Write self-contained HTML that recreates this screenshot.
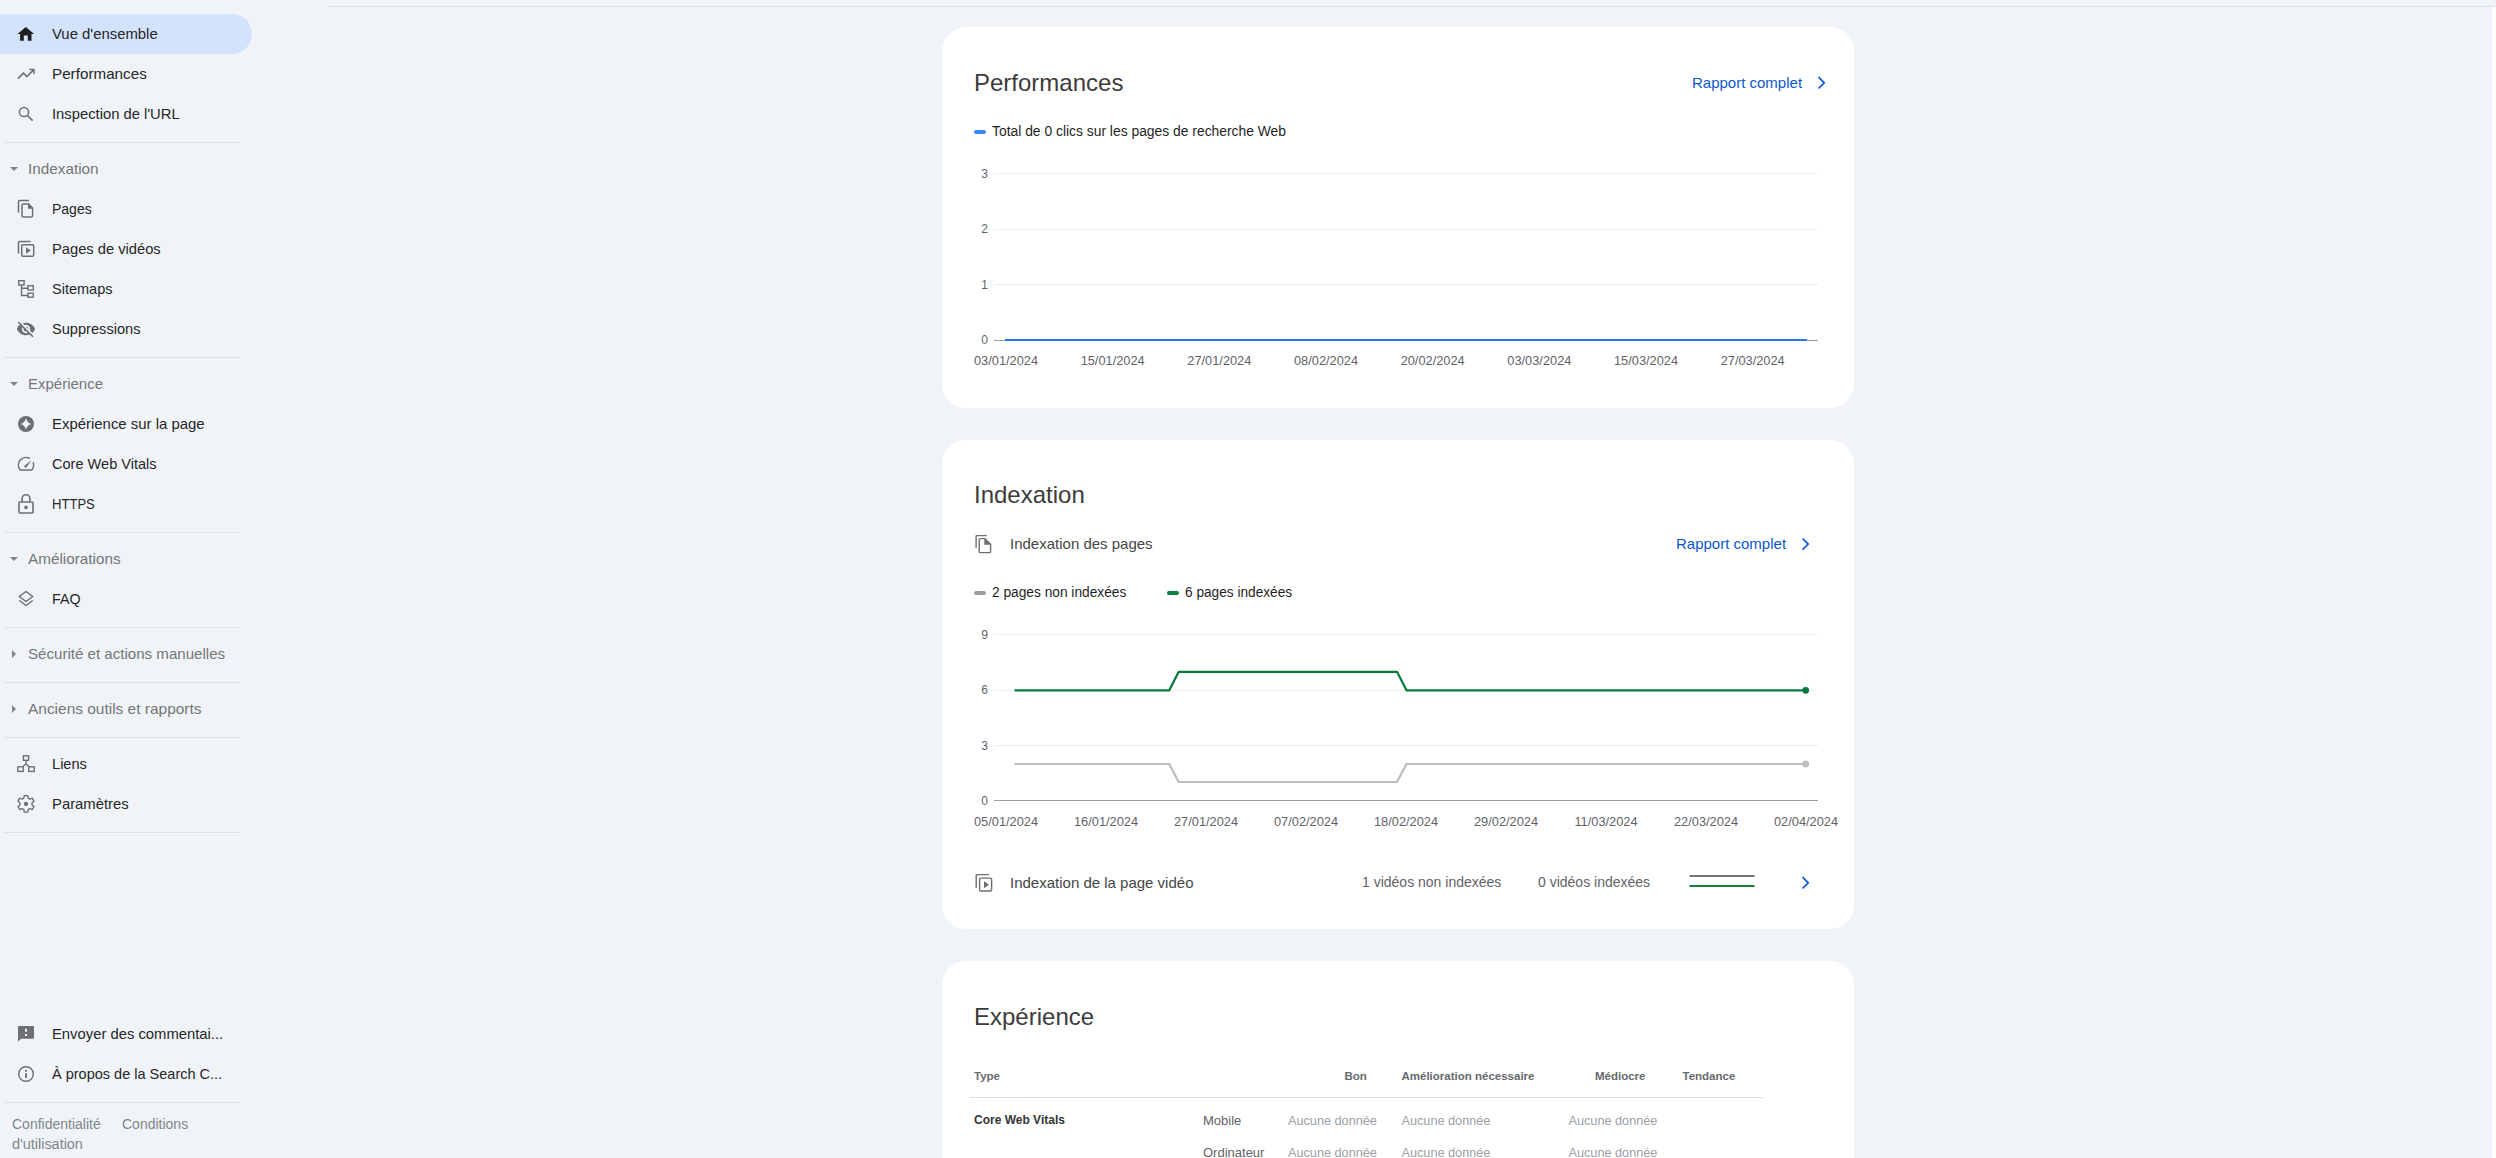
<!DOCTYPE html>
<html><head><meta charset="utf-8">
<style>
*{margin:0;padding:0;box-sizing:border-box}
html,body{width:2496px;height:1158px;overflow:hidden;background:#f0f4f9;font-family:"Liberation Sans",sans-serif;color:#1f1f1f}
.a{position:absolute;white-space:nowrap}
.topline{position:absolute;left:328px;top:6px;width:2168px;height:1px;background:#e0e1de}
.rstrip{position:absolute;left:2492px;top:7px;width:4px;height:1151px;background:#fff}
.pill{position:absolute;left:0;top:14px;width:252px;height:40px;background:#d3e3fd;border-radius:0 20px 20px 0}
.it{position:absolute;left:52px;transform-origin:0 0;font-size:15px;line-height:20px;color:#262626}
.sec{position:absolute;left:28px;transform-origin:0 0;font-size:15px;line-height:20px;color:#747775}
.ic{position:absolute;left:14px;width:24px;height:24px}
.dv{position:absolute;left:4px;width:236px;height:1px;background:#e1e1e1}
.tri{position:absolute;width:0;height:0}
.card{position:absolute;left:942px;width:912px;background:#fff;border-radius:24px}
.h{position:absolute;left:32px;font-size:24px;line-height:32px;color:#1f1f1f}
.lnk{position:absolute;font-size:15px;line-height:20px;color:#0b57d0}
.yl{position:absolute;font-size:12px;line-height:14px;color:#5f6368;text-align:right;width:20px}
.xl{position:absolute;font-size:12.5px;line-height:14px;color:#5f6368;text-align:center;width:80px}
.lg{position:absolute;font-size:14px;line-height:18px;color:#1f1f1f}
.th{position:absolute;font-size:12px;font-weight:bold;line-height:16px;color:#5f6368}
.td{position:absolute;font-size:13px;line-height:16px;color:#9aa0a6}
</style></head><body>
<div class="topline"></div>
<div class="rstrip"></div>
<div class="pill"></div>
<!-- SIDEBAR -->
<svg class="ic" style="top:22px" viewBox="0 0 24 24"><path fill="#1f1f1f" d="M6.1 18.7V11.9H3.5L11.8 4.9L20.1 11.9H17.5V18.7H13.8V13.5H9.8V18.7Z"/></svg>
<div class="it" style="top:24px;transform:scaleX(0.992)">Vue d'ensemble</div>
<svg class="ic" style="top:62px" viewBox="0 0 24 24"><path fill="none" stroke="#6e6f71" stroke-width="1.5" d="M3.9 16.6L9.4 11.1L12.9 14.6L19.6 7.9M15.3 7.4H20V12.1"/></svg>
<div class="it" style="top:64px;transform:scaleX(1.015)">Performances</div>
<svg class="ic" style="top:102px" viewBox="0 0 24 24"><circle cx="10" cy="10" r="4.6" fill="none" stroke="#6e6f71" stroke-width="1.5"/><path d="M13.4 13.4l5.2 5.2" stroke="#6e6f71" stroke-width="1.6"/></svg>
<div class="it" style="top:104px;transform:scaleX(0.985)">Inspection de l'URL</div>
<div class="dv" style="top:142px"></div>
<svg class="ic" style="top:157px;left:2px" viewBox="0 0 24 24"><path fill="#80868b" d="M8 10l4 4 4-4z"/></svg>
<div class="sec" style="top:159px;transform:scaleX(1.02)">Indexation</div>
<svg class="ic" style="top:197px" viewBox="0 0 24 24"><g fill="none" stroke="#6e6f71" stroke-width="1.5"><path d="M4.5 15.5V4.8q0-1.3 1.3-1.3H15"/><path d="M14.6 7.1H9.3q-1.3 0-1.3 1.3v10.3q0 1.3 1.3 1.3h8q1.3 0 1.3-1.3V11.1z"/></g><path fill="#6e6f71" d="M14 6.6v5.2h5.1z"/></svg>
<div class="it" style="top:199px;transform:scaleX(0.933)">Pages</div>
<svg class="ic" style="top:237px" viewBox="0 0 24 24"><g fill="none" stroke="#6e6f71" stroke-width="1.5"><path d="M4.5 16.5V5.6q0-1.2 1.2-1.2H16.6"/><rect x="7.7" y="7.7" width="12" height="11.6" rx="1.4"/></g><path fill="#6e6f71" d="M12 10.2v6.6l4.9-3.3z"/></svg>
<div class="it" style="top:239px;transform:scaleX(0.98)">Pages de vidéos</div>
<svg class="ic" style="top:277px" viewBox="0 0 24 24"><g fill="none" stroke="#6e6f71" stroke-width="1.4"><rect x="4.7" y="3.7" width="5.4" height="4.3"/><rect x="14" y="8.7" width="5.2" height="4.3"/><rect x="14" y="16.2" width="5.2" height="4"/><path d="M7.5 8v10.5h6.5M7.5 11.3h6.5"/></g></svg>
<div class="it" style="top:279px;transform:scaleX(0.968)">Sitemaps</div>
<svg class="ic" style="top:317px" viewBox="0 0 24 24"><path fill="#6e6f71" transform="translate(2 2) scale(0.833)" d="M12 7c2.76 0 5 2.24 5 5 0 .65-.13 1.26-.36 1.83l2.92 2.92c1.51-1.26 2.7-2.89 3.43-4.75-1.73-4.39-6-7.5-11-7.5-1.4 0-2.74.25-3.98.7l2.16 2.16C10.74 7.130 11.35 7 12 7zM2 4.27l2.28 2.28.46.46C3.080 8.3 1.78 10.02 1 12c1.73 4.39 6 7.5 11 7.5 1.55 0 3.03-.3 4.38-.84l.42.42L19.73 22 21 20.73 3.27 3 2 4.27zM7.53 9.8l1.55 1.55c-.05.21-.08.43-.08.65 0 1.66 1.34 3 3 3 .22 0 .44-.03.65-.08l1.55 1.55c-.67.33-1.41.53-2.2.53-2.76 0-5-2.24-5-5 0-.79.2-1.53.53-2.2zm4.31-.78l3.15 3.15.02-.16c0-1.66-1.34-3-3-3l-.17.01z"/></svg>
<div class="it" style="top:319px;transform:scaleX(0.974)">Suppressions</div>
<div class="dv" style="top:357px"></div>
<svg class="ic" style="top:372px;left:2px" viewBox="0 0 24 24"><path fill="#80868b" d="M8 10l4 4 4-4z"/></svg>
<div class="sec" style="top:374px;transform:scaleX(1.0)">Expérience</div>
<svg class="ic" style="top:412px" viewBox="0 0 24 24"><circle cx="12" cy="12" r="8" fill="#6e6f71"/><path fill="#f0f4f9" d="M12 6.3Q13.2 10.8 17.3 12Q13.2 13.2 12 17.5Q10.8 13.2 6.7 12Q10.8 10.8 12 6.3z"/></svg>
<div class="it" style="top:414px;transform:scaleX(0.995)">Expérience sur la page</div>
<svg class="ic" style="top:452px" viewBox="0 0 24 24"><g fill="none" stroke="#6e6f71" stroke-width="1.5"><path d="M15.8 6.52A7.6 7.6 0 0 0 6.19 18H17.81A7.6 7.6 0 0 0 19.07 10.3"/></g><path fill="#6e6f71" d="M11 13.2l6.5-5-4.7 6.6a1.3 1.3 0 1 1-1.8-1.6z"/></svg>
<div class="it" style="top:454px;transform:scaleX(0.97)">Core Web Vitals</div>
<svg class="ic" style="top:492px" viewBox="0 0 24 24"><g fill="none" stroke="#6e6f71" stroke-width="1.6"><rect x="5" y="10" width="14" height="11" rx="1"/><path d="M8.1 10V6.6a3.9 3.9 0 0 1 7.8 0V10"/></g><circle cx="12" cy="15.4" r="1.8" fill="#6e6f71"/></svg>
<div class="it" style="top:494px;transform:scaleX(0.871)">HTTPS</div>
<div class="dv" style="top:532px"></div>
<svg class="ic" style="top:547px;left:2px" viewBox="0 0 24 24"><path fill="#80868b" d="M8 10l4 4 4-4z"/></svg>
<div class="sec" style="top:549px;transform:scaleX(1.02)">Améliorations</div>
<svg class="ic" style="top:587px" viewBox="0 0 24 24"><g fill="none" stroke="#6e6f71" stroke-width="1.5" stroke-linejoin="round"><path d="M12 4.5l6.8 5-6.8 5-6.8-5z"/><path d="M5.3 13.5l6.7 5 6.8-5"/></g></svg>
<div class="it" style="top:589px;transform:scaleX(0.95)">FAQ</div>
<div class="dv" style="top:627px"></div>
<svg class="ic" style="top:642px;left:2px" viewBox="0 0 24 24"><path fill="#80868b" d="M10 8l4 4-4 4z"/></svg>
<div class="sec" style="top:644px;transform:scaleX(1.006)">Sécurité et actions manuelles</div>
<div class="dv" style="top:682px"></div>
<svg class="ic" style="top:697px;left:2px" viewBox="0 0 24 24"><path fill="#80868b" d="M10 8l4 4-4 4z"/></svg>
<div class="sec" style="top:699px;transform:scaleX(1.03)">Anciens outils et rapports</div>
<div class="dv" style="top:737px"></div>
<svg class="ic" style="top:752px" viewBox="0 0 24 24"><g fill="none" stroke="#6e6f71" stroke-width="1.4"><rect x="9.4" y="3.8" width="5.2" height="4.5"/><rect x="3.8" y="14.8" width="5.4" height="4.6"/><rect x="14.8" y="14.8" width="5.4" height="4.6"/><path d="M12 8.3v3.7l-3.3 2.8M12 12l3.3 2.8"/></g></svg>
<div class="it" style="top:754px;transform:scaleX(0.974)">Liens</div>
<svg class="ic" style="top:792px" viewBox="0 0 24 24"><path fill="none" stroke="#6e6f71" stroke-width="1.4" stroke-linejoin="round" d="M10.3 3.6h3.4l.5 2.6 1.6.9 2.5-.9 1.7 2.9-2 1.8v1.9l2 1.8-1.7 2.9-2.5-.9-1.6.9-.5 2.6h-3.4l-.5-2.6-1.6-.9-2.5.9-1.7-2.9 2-1.8v-1.9l-2-1.8 1.7-2.9 2.5.9 1.6-.9z"/><circle cx="12" cy="11.9" r="2.1" fill="#6e6f71"/></svg>
<div class="it" style="top:794px;transform:scaleX(0.988)">Paramètres</div>
<div class="dv" style="top:832px"></div>
<svg class="ic" style="top:1022px" viewBox="0 0 24 24"><path fill="#6e6f71" d="M5 4h14a1 1 0 0 1 1 1v10.8a1 1 0 0 1-1 1H7l-3 3V5a1 1 0 0 1 1-1z"/><path fill="#f0f4f9" d="M11 6.8h2v3h-2zM11 12h2v2h-2z"/></svg>
<div class="it" style="top:1024px;transform:scaleX(0.987)">Envoyer des commentai...</div>
<svg class="ic" style="top:1062px" viewBox="0 0 24 24"><circle cx="12" cy="12" r="7.3" fill="none" stroke="#6e6f71" stroke-width="1.4"/><path fill="#6e6f71" d="M11.1 8h1.8v1.8h-1.8zM11.1 11.2h1.8V16h-1.8z"/></svg>
<div class="it" style="top:1064px;transform:scaleX(0.967)">À propos de la Search C...</div>
<div class="dv" style="top:1102px"></div>
<div class="a" style="left:12px;top:1116px;font-size:14px;line-height:16px;color:#80868b">Confidentialité</div>
<div class="a" style="left:122px;top:1116px;font-size:14px;line-height:16px;color:#80868b">Conditions</div>
<div class="a" style="left:12px;top:1136px;font-size:14px;line-height:16px;color:#80868b;transform:scaleX(1.03);transform-origin:0 0">d'utilisation</div>

<!-- CARDS -->
<div class="card" style="top:27px;height:381px"></div>
<div class="card" style="top:440px;height:489px"></div>
<div class="card" style="top:961px;height:240px"></div>
<div class="a" style="left:974px;top:70.68px;font-size:24px;line-height:24px;color:#3c3c3c">Performances</div>
<div class="a" style="left:1692px;top:75.3px;font-size:15px;line-height:15px;color:#0b57d0">Rapport complet</div>
<svg class="a" style="left:1810px;top:72px" width="20" height="22"><path d="M8.6 5.2l5.6 5.6-5.6 5.6" fill="none" stroke="#0b57d0" stroke-width="1.7"/></svg>
<div class="a" style="left:974px;top:130px;width:12px;height:4px;border-radius:2px;background:#4285f4"></div>
<div class="a" style="left:992px;top:124.15px;font-size:14px;line-height:14px;color:#1f1f1f;transform:scaleX(0.99);transform-origin:0 0">Total de 0 clics sur les pages de recherche Web</div>
<svg class="a" style="left:0;top:0" width="2496" height="1158"><line x1="994" x2="1818" y1="173.5" y2="173.5" stroke="#ececec" stroke-width="1"/><line x1="994" x2="1818" y1="229.5" y2="229.5" stroke="#ececec" stroke-width="1"/><line x1="994" x2="1818" y1="284.5" y2="284.5" stroke="#ececec" stroke-width="1"/><line x1="994" x2="1818" y1="340.5" y2="340.5" stroke="#9e9e9e" stroke-width="1"/><line x1="1005" x2="1807" y1="340" y2="340" stroke="#2b78f0" stroke-width="2.2"/><line x1="994" x2="1818" y1="634.5" y2="634.5" stroke="#ececec" stroke-width="1"/><line x1="994" x2="1818" y1="690.5" y2="690.5" stroke="#ececec" stroke-width="1"/><line x1="994" x2="1818" y1="745.5" y2="745.5" stroke="#ececec" stroke-width="1"/><line x1="994" x2="1818" y1="800.5" y2="800.5" stroke="#9e9e9e" stroke-width="1"/><polyline fill="none" stroke="#bdbdbd" stroke-width="2.2" stroke-linejoin="round" points="1014.5,764 1169.3,764 1178.7,782 1397,782 1406.5,764 1805.7,764"/><circle cx="1805.7" cy="764" r="3.4" fill="#bdbdbd"/><polyline fill="none" stroke="#067a3d" stroke-width="2.2" stroke-linejoin="round" points="1014.5,690.3 1169.3,690.3 1178.7,671.8 1397,671.8 1406.5,690.3 1805.7,690.3"/><circle cx="1805.7" cy="690.3" r="3.4" fill="#067a3d"/><line x1="1689.5" x2="1754.5" y1="876" y2="876" stroke="#757575" stroke-width="2"/><line x1="1689.5" x2="1754.5" y1="886" y2="886" stroke="#188038" stroke-width="2"/><path d="M1802.6 877.2l5.6 5.6-5.6 5.6" fill="none" stroke="#0b57d0" stroke-width="1.7"/><line x1="970" x2="1763" y1="1097.5" y2="1097.5" stroke="#e0e0e0" stroke-width="1"/></svg>
<div class="a" style="left:968px;width:20px;text-align:right;top:167.64px;font-size:12px;line-height:12px;color:#5f6368">3</div>
<div class="a" style="left:968px;width:20px;text-align:right;top:223.14px;font-size:12px;line-height:12px;color:#5f6368">2</div>
<div class="a" style="left:968px;width:20px;text-align:right;top:278.64px;font-size:12px;line-height:12px;color:#5f6368">1</div>
<div class="a" style="left:968px;width:20px;text-align:right;top:334.14px;font-size:12px;line-height:12px;color:#5f6368">0</div>
<div class="a" style="left:956.00px;width:100px;text-align:center;top:354.96px;font-size:12.8px;line-height:12.8px;color:#5f6368">03/01/2024</div>
<div class="a" style="left:1062.67px;width:100px;text-align:center;top:354.96px;font-size:12.8px;line-height:12.8px;color:#5f6368">15/01/2024</div>
<div class="a" style="left:1169.34px;width:100px;text-align:center;top:354.96px;font-size:12.8px;line-height:12.8px;color:#5f6368">27/01/2024</div>
<div class="a" style="left:1276.01px;width:100px;text-align:center;top:354.96px;font-size:12.8px;line-height:12.8px;color:#5f6368">08/02/2024</div>
<div class="a" style="left:1382.68px;width:100px;text-align:center;top:354.96px;font-size:12.8px;line-height:12.8px;color:#5f6368">20/02/2024</div>
<div class="a" style="left:1489.35px;width:100px;text-align:center;top:354.96px;font-size:12.8px;line-height:12.8px;color:#5f6368">03/03/2024</div>
<div class="a" style="left:1596.02px;width:100px;text-align:center;top:354.96px;font-size:12.8px;line-height:12.8px;color:#5f6368">15/03/2024</div>
<div class="a" style="left:1702.69px;width:100px;text-align:center;top:354.96px;font-size:12.8px;line-height:12.8px;color:#5f6368">27/03/2024</div>
<div class="a" style="left:974px;top:483.38px;font-size:24px;line-height:24px;color:#3c3c3c">Indexation</div>
<svg class="a" style="left:971px;top:532px" width="24" height="24" viewBox="0 0 24 24"><g fill="none" stroke="#6e6f71" stroke-width="1.4"><path d="M5.1 15.7V4.6q0-1 1-1h9.8"/><path d="M13.9 6.6H9.4q-1.2 0-1.2 1.2v11.6q0 1.2 1.2 1.2h9q1.2 0 1.2-1.2V12.2z"/></g><path fill="#6e6f71" d="M13.3 6.2v6.5h6.6z"/></svg>
<div class="a" style="left:1010px;top:536.1px;font-size:15px;line-height:15px;color:#444746">Indexation des pages</div>
<div class="a" style="left:1676px;top:536.2px;font-size:15px;line-height:15px;color:#0b57d0">Rapport complet</div>
<svg class="a" style="left:1794px;top:533px" width="20" height="22"><path d="M8.6 5.5l5.6 5.6-5.6 5.6" fill="none" stroke="#0b57d0" stroke-width="1.7"/></svg>
<div class="a" style="left:974px;top:591px;width:12px;height:4px;border-radius:2px;background:#9e9e9e"></div>
<div class="a" style="left:992px;top:585.05px;font-size:14px;line-height:14px;color:#1f1f1f;transform:scaleX(0.98);transform-origin:0 0">2 pages non indexées</div>
<div class="a" style="left:1167px;top:591px;width:12px;height:4px;border-radius:2px;background:#0b8044"></div>
<div class="a" style="left:1185px;top:585.05px;font-size:14px;line-height:14px;color:#1f1f1f;transform:scaleX(0.976);transform-origin:0 0">6 pages indexées</div>
<div class="a" style="left:968px;width:20px;text-align:right;top:628.64px;font-size:12px;line-height:12px;color:#5f6368">9</div>
<div class="a" style="left:968px;width:20px;text-align:right;top:684.14px;font-size:12px;line-height:12px;color:#5f6368">6</div>
<div class="a" style="left:968px;width:20px;text-align:right;top:739.64px;font-size:12px;line-height:12px;color:#5f6368">3</div>
<div class="a" style="left:968px;width:20px;text-align:right;top:794.64px;font-size:12px;line-height:12px;color:#5f6368">0</div>
<div class="a" style="left:956.00px;width:100px;text-align:center;top:816.06px;font-size:12.8px;line-height:12.8px;color:#5f6368">05/01/2024</div>
<div class="a" style="left:1056.00px;width:100px;text-align:center;top:816.06px;font-size:12.8px;line-height:12.8px;color:#5f6368">16/01/2024</div>
<div class="a" style="left:1156.00px;width:100px;text-align:center;top:816.06px;font-size:12.8px;line-height:12.8px;color:#5f6368">27/01/2024</div>
<div class="a" style="left:1256.00px;width:100px;text-align:center;top:816.06px;font-size:12.8px;line-height:12.8px;color:#5f6368">07/02/2024</div>
<div class="a" style="left:1356.00px;width:100px;text-align:center;top:816.06px;font-size:12.8px;line-height:12.8px;color:#5f6368">18/02/2024</div>
<div class="a" style="left:1456.00px;width:100px;text-align:center;top:816.06px;font-size:12.8px;line-height:12.8px;color:#5f6368">29/02/2024</div>
<div class="a" style="left:1556.00px;width:100px;text-align:center;top:816.06px;font-size:12.8px;line-height:12.8px;color:#5f6368">11/03/2024</div>
<div class="a" style="left:1656.00px;width:100px;text-align:center;top:816.06px;font-size:12.8px;line-height:12.8px;color:#5f6368">22/03/2024</div>
<div class="a" style="left:1756.00px;width:100px;text-align:center;top:816.06px;font-size:12.8px;line-height:12.8px;color:#5f6368">02/04/2024</div>
<svg class="a" style="left:971px;top:871px" width="24" height="24" viewBox="0 0 24 24"><g fill="none" stroke="#6e6f71" stroke-width="1.4"><path d="M5.2 16.8V4.6q0-1 1-1h11.7"/><rect x="8.6" y="7.1" width="12" height="12.9" rx="1.3"/></g><path fill="#6e6f71" d="M13 10v7.3l4.9-3.65z"/></svg>
<div class="a" style="left:1010px;top:875.4px;font-size:15px;line-height:15px;color:#444746">Indexation de la page vidéo</div>
<div class="a" style="left:1362px;top:875.25px;font-size:14px;line-height:14px;color:#5f6368">1 vidéos non indexées</div>
<div class="a" style="left:1538px;top:875.25px;font-size:14px;line-height:14px;color:#5f6368">0 vidéos indexées</div>
<div class="a" style="left:974px;top:1004.88px;font-size:24px;line-height:24px;color:#3c3c3c">Expérience</div>
<div class="a" style="left:974px;top:1071.07px;font-size:11.5px;font-weight:bold;line-height:11.5px;color:#666a6e">Type</div>
<div class="a" style="left:1344.5px;top:1071.07px;font-size:11.5px;font-weight:bold;line-height:11.5px;color:#666a6e">Bon</div>
<div class="a" style="left:1401.5px;top:1071.07px;font-size:11.5px;font-weight:bold;line-height:11.5px;color:#666a6e">Amélioration nécessaire</div>
<div class="a" style="left:1595px;top:1071.07px;font-size:11.5px;font-weight:bold;line-height:11.5px;color:#666a6e">Médiocre</div>
<div class="a" style="left:1682.5px;top:1071.07px;font-size:11.5px;font-weight:bold;line-height:11.5px;color:#666a6e">Tendance</div>
<div class="a" style="left:974px;top:1114.44px;font-size:12px;font-weight:bold;line-height:12px;color:#363636">Core Web Vitals</div>
<div class="a" style="left:1203px;top:1114.0px;font-size:13px;line-height:13px;color:#5f6368">Mobile</div>
<div class="a" style="left:1288px;top:1115.25px;font-size:12.7px;line-height:12.7px;color:#9aa0a6">Aucune donnée</div>
<div class="a" style="left:1401.5px;top:1115.25px;font-size:12.7px;line-height:12.7px;color:#9aa0a6">Aucune donnée</div>
<div class="a" style="left:1568.5px;top:1115.25px;font-size:12.7px;line-height:12.7px;color:#9aa0a6">Aucune donnée</div>
<div class="a" style="left:1203px;top:1145.8px;font-size:13px;line-height:13px;color:#5f6368">Ordinateur</div>
<div class="a" style="left:1288px;top:1147.05px;font-size:12.7px;line-height:12.7px;color:#9aa0a6">Aucune donnée</div>
<div class="a" style="left:1401.5px;top:1147.05px;font-size:12.7px;line-height:12.7px;color:#9aa0a6">Aucune donnée</div>
<div class="a" style="left:1568.5px;top:1147.05px;font-size:12.7px;line-height:12.7px;color:#9aa0a6">Aucune donnée</div>
</body></html>
